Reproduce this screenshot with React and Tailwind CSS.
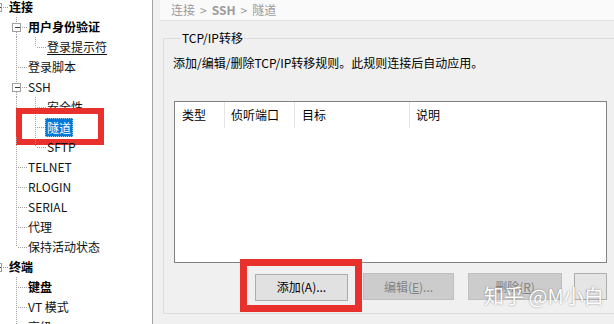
import React from "react";

const font = "font-['Noto_Sans_CJK_SC',sans-serif]";

const rows = [
  { t: "连接", d: 0, exp: true, b: true },
  { t: "用户身份验证", d: 1, exp: true, b: true },
  { t: "登录提示符", d: 2, link: true, last: true },
  { t: "登录脚本", d: 1 },
  { t: "SSH", d: 1, exp: true },
  { t: "安全性", d: 2 },
  { t: "隧道", d: 2, sel: true },
  { t: "SFTP", d: 2, last: true },
  { t: "TELNET", d: 1 },
  { t: "RLOGIN", d: 1 },
  { t: "SERIAL", d: 1 },
  { t: "代理", d: 1 },
  { t: "保持活动状态", d: 1, last: true },
  { t: "终端", d: 0, exp: true, b: true },
  { t: "键盘", d: 1, b: true },
  { t: "VT 模式", d: 1 },
  { t: "高级", d: 1 },
];

const dot = { stroke: "#a0a0a0", strokeDasharray: "1 1", strokeWidth: 1 };

function Guide({ d, exp, last }) {
  const L = -3 + 19 * d + 0.5;
  const w = [9, 28, 47][d];
  return (
    <svg width={w} height="20" className="shrink-0 overflow-visible" shapeRendering="crispEdges">
      {d === 2 && <line x1="16.5" y1="0" x2="16.5" y2="20" {...dot} />}
      {exp ? (
        <>
          <line x1={L} y1="0" x2={L} y2="6" {...dot} />
          {!last && <line x1={L} y1="15" x2={L} y2="20" {...dot} />}
          <line x1={L + 5} y1="10.5" x2={L + 10} y2="10.5" {...dot} />
          <rect x={L - 4} y="6.5" width="8" height="8" fill="#fff" stroke="#a0a0a0" />
          <line x1={L - 2} y1="10.5" x2={L + 3} y2="10.5" stroke="#404040" />
        </>
      ) : (
        <>
          <line x1={L} y1="0" x2={L} y2={last ? 10 : 20} {...dot} />
          <line x1={L + 1} y1="10.5" x2={L + 10} y2="10.5" {...dot} />
        </>
      )}
    </svg>
  );
}

function Tree() {
  return (
    <div className="w-[153px] shrink-0 h-full bg-white border-r border-[#a0a0a0] overflow-hidden">
      <div className="-mt-[3px]">
        {rows.map((r) => (
          <div key={r.t} className="relative flex h-5 items-center">
            <Guide d={r.d} exp={r.exp} last={r.last} />
            {r.sel ? (
              <span className="-ml-[2px] h-[19px] px-[2px] leading-[19px] text-[12px] text-white bg-[#0078d7] outline outline-1 outline-dotted outline-[#9cc9ee] -outline-offset-1">
                {r.t}
              </span>
            ) : (
              <span
                className={
                  "text-[12px] leading-[16px] whitespace-nowrap " +
                  (r.b ? "font-bold text-black " : "text-[#111] ") +
                  (r.link ? "text-[#0066cc] underline underline-offset-2" : "")
                }
              >
                {r.t}
              </span>
            )}
            {r.sel && (
              <div className="absolute left-[16px] -top-[9px] w-[88px] h-[37px] border-[6px] border-[#e8302c]" />
            )}
          </div>
        ))}
      </div>
    </div>
  );
}

function Btn({ children, disabled, className = "" }) {
  return (
    <button
      className={
        "h-[27px] border text-[12px] leading-none " +
        (disabled
          ? "bg-[#cccccc] border-[#bfbfbf] text-[#838383] "
          : "bg-[#e1e1e1] border-[#adadad] text-black ") +
        className
      }
    >
      {children}
    </button>
  );
}

export default function App() {
  return (
    <div className={"relative flex w-[614px] h-[324px] overflow-hidden " + font}>
      <Tree />
      <div className="flex-1 bg-[#f0f0f0] overflow-hidden">
        <div className="ml-[7px] h-[21px] flex items-center gap-[5px] pl-[11px] bg-[#fafafa] border-b border-[#e3e3e3] text-[12px] text-[#9a9a9a] whitespace-nowrap">
          <span>连接</span>
          <span>&gt;</span>
          <span className="font-bold">SSH</span>
          <span>&gt;</span>
          <span>隧道</span>
        </div>
        <fieldset className="ml-[10px] mt-[9px] w-[480px] border border-[#dcdcdc] pl-[10px] pb-[12px]">
          <legend className="ml-[7px] px-[1px] text-[12px] leading-[16px] text-black">TCP/IP转移</legend>
          <div className="mt-[9px] -ml-[1px] text-[12px] leading-[16px] text-black whitespace-nowrap">
            添加/编辑/删除TCP/IP转移规则。此规则连接后自动应用。
          </div>
          <div className="mt-[30px] w-[433px] h-[162px] bg-white border border-[#828282]">
            <div className="flex h-[26px] items-center text-[12px] text-black">
              <div className="w-[50px] h-full flex items-center pl-[7px] border-r border-[#e5e5e5]">类型</div>
              <div className="w-[70px] h-full flex items-center pl-[6px] border-r border-[#e5e5e5]">侦听端口</div>
              <div className="w-[115px] h-full flex items-center pl-[7px] border-r border-[#e5e5e5]">目标</div>
              <div className="flex-1 h-full flex items-center pl-[6px]">说明</div>
            </div>
          </div>
          <div className="mt-[10px] flex">
            <div className="relative ml-[81px]">
              <Btn className="w-[93px]">添加(A)...</Btn>
              <div className="absolute -left-[15px] -right-[14px] -top-[14px] -bottom-[11px] border-[7px] border-[#e8302c]" />
            </div>
            <Btn disabled className="ml-[15px] w-[91px]">
              编辑(<span className="underline">E</span>)...
            </Btn>
            <Btn disabled className="ml-[14px] w-[94px]">
              删除(<span className="underline">R</span>)
            </Btn>
            <Btn className="ml-[12px] w-[33px] bg-[#e5e5e5]">...</Btn>
          </div>
        </fieldset>
      </div>
      <div className="absolute left-[484px] top-[284px] text-[20px] leading-[24px] text-white whitespace-nowrap [text-shadow:0_0_2px_rgba(0,0,0,0.45)]">
        知乎 @M小白
      </div>
    </div>
  );
}
